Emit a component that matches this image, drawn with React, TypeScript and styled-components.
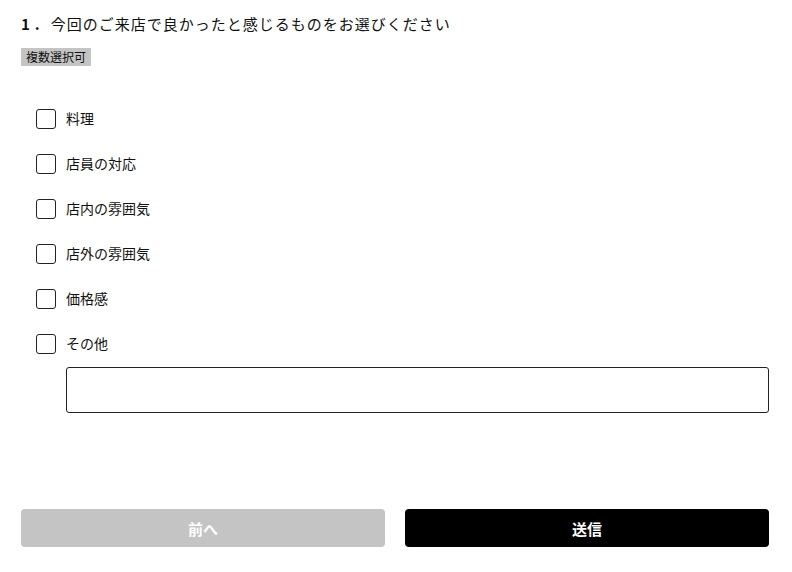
import React from "react";
import styled, { createGlobalStyle } from "styled-components";

const GlobalStyle = createGlobalStyle`
  html, body {
    margin: 0;
    padding: 0;
    background: #fff;
    font-family: "Noto Sans CJK JP", "Noto Sans", sans-serif;
    color: #111;
  }
`;

const Page = styled.div`
  width: 792px;
  height: 572px;
  box-sizing: border-box;
  padding: 12px 23px 0 21px;
  display: flex;
  flex-direction: column;
`;

const Title = styled.h1`
  margin: 0;
  font-size: 15px;
  font-weight: 400;
  line-height: 24px;
  letter-spacing: 1px;
`;

const Num = styled.span`
  font-weight: 700;
  letter-spacing: 5px;
  margin-right: 6px;
`;

const Badge = styled.span`
  align-self: flex-start;
  margin-top: 12px;
  background: #c4c4c4;
  font-size: 12px;
  line-height: 18px;
  padding: 0 5px;
  color: #111;
`;

const Options = styled.div`
  display: flex;
  flex-direction: column;
  gap: 25px;
  margin-top: 43px;
  padding-left: 15px;
`;

const Option = styled.label`
  display: flex;
  align-items: center;
  gap: 10px;
  height: 20px;
  font-size: 14px;
  line-height: 18px;
`;

const Label = styled.span`
  margin-top: -3px;
`;

const Box = styled.span`
  width: 20px;
  height: 20px;
  box-sizing: border-box;
  border: 1px solid #222;
  border-radius: 3px;
  flex: none;
`;

const OtherInput = styled.div`
  margin: 13px 0 0 45px;
  height: 46px;
  box-sizing: border-box;
  border: 1px solid #222;
  border-radius: 3px;
`;

const Buttons = styled.div`
  margin-top: auto;
  margin-bottom: 25px;
  display: grid;
  grid-template-columns: 1fr 1fr;
  gap: 20px;
`;

const Button = styled.button<{ $primary?: boolean }>`
  height: 38px;
  border: none;
  border-radius: 4px;
  background: ${(p) => (p.$primary ? "#000" : "#c4c4c4")};
  color: #fff;
  font-family: inherit;
  font-size: 15px;
  font-weight: 700;
`;

const items = ["料理", "店員の対応", "店内の雰囲気", "店外の雰囲気", "価格感", "その他"];

export default function App() {
  return (
    <>
      <GlobalStyle />
      <Page>
        <Title>
          <Num>1.</Num>今回のご来店で良かったと感じるものをお選びください
        </Title>
        <Badge>複数選択可</Badge>
        <Options>
          {items.map((item) => (
            <Option key={item}>
              <Box />
              <Label>{item}</Label>
            </Option>
          ))}
        </Options>
        <OtherInput />
        <Buttons>
          <Button>前へ</Button>
          <Button $primary>送信</Button>
        </Buttons>
      </Page>
    </>
  );
}
